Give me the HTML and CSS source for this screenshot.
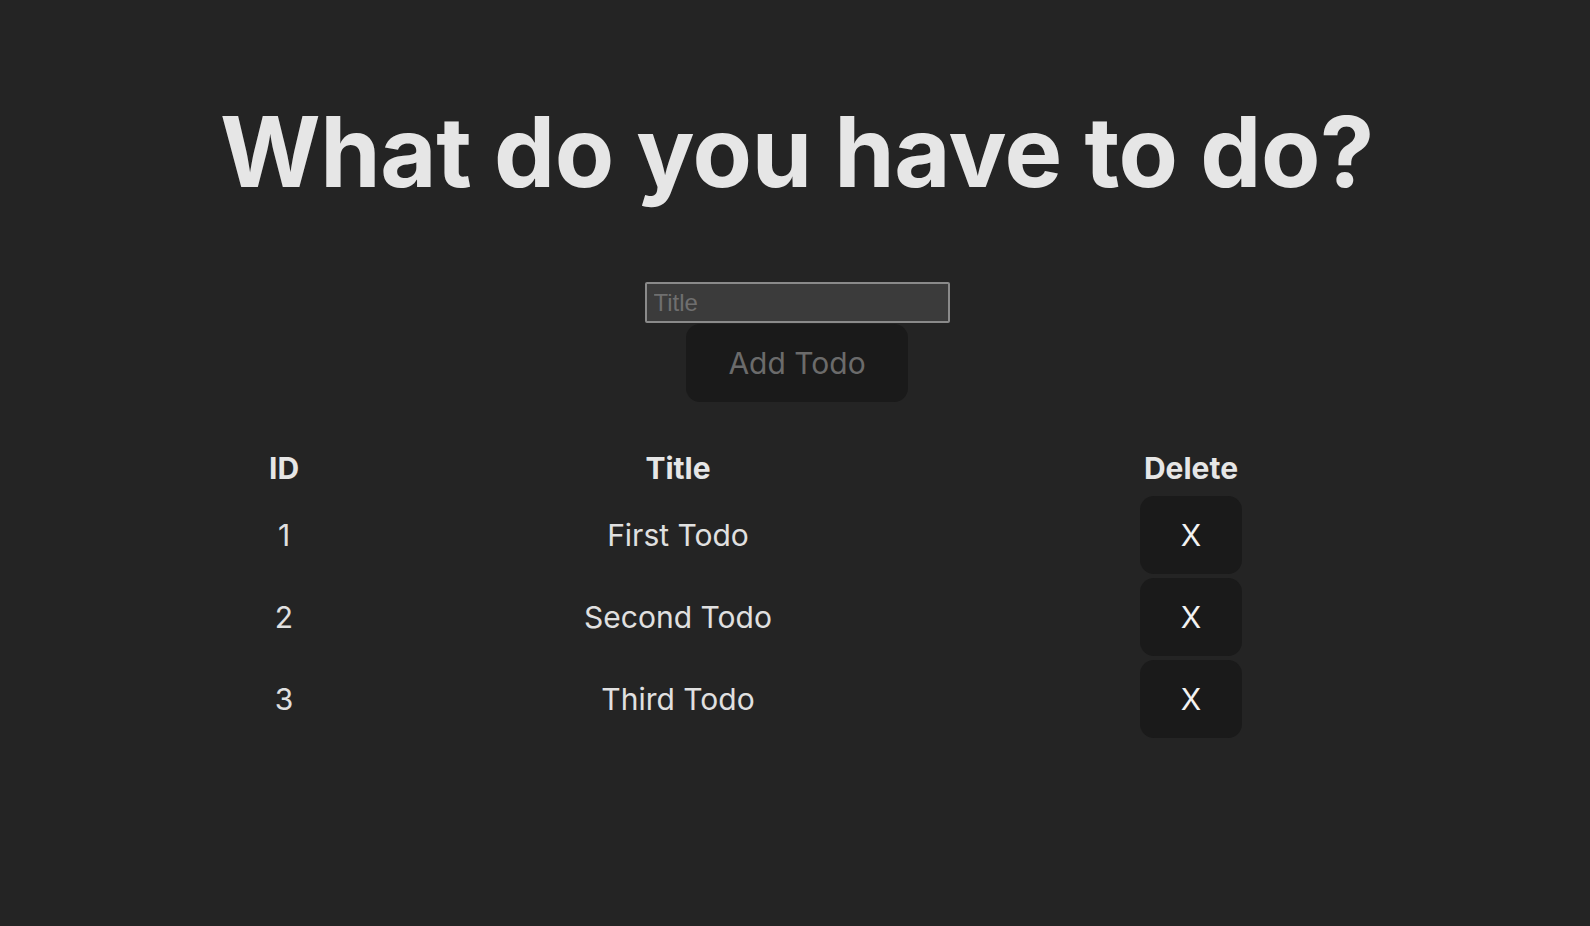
FILE: index.html
```html
<!DOCTYPE html>
<html lang="en">
<head>
<meta charset="utf-8">
<title>Todo</title>
<link rel="stylesheet" href="styles.css">
</head>
<body>
<main class="app">
  <h1 class="title">What do you have to do?</h1>
  <form class="add-form">
    <input class="title-input" type="text" placeholder="Title">
    <button class="btn add-btn" type="button" disabled>Add Todo</button>
  </form>
  <table class="todo-table">
    <colgroup>
      <col class="col-id">
      <col class="col-title">
      <col class="col-delete">
    </colgroup>
    <thead>
      <tr><th>ID</th><th>Title</th><th>Delete</th></tr>
    </thead>
    <tbody>
      <tr><td>1</td><td>First Todo</td><td><button class="btn del-btn" type="button">X</button></td></tr>
      <tr><td>2</td><td>Second Todo</td><td><button class="btn del-btn" type="button">X</button></td></tr>
      <tr><td>3</td><td>Third Todo</td><td><button class="btn del-btn" type="button">X</button></td></tr>
    </tbody>
  </table>
</main>
</body>
</html>
```
FILE: styles.css
```css
html, body {
  margin: 0;
  padding: 0;
}
body {
  background: #242424;
  color: rgba(255, 255, 255, 0.87);
  font-family: Inter, "Noto Sans", sans-serif;
  min-height: 926px;
}
.app {
  display: flex;
  flex-direction: column;
  align-items: center;
  padding: 97px 0 0 4px;
}
.title {
  margin: 0;
  font-size: 97px;
  line-height: 110px;
  font-weight: 700;
  color: #e6e6e6;
  letter-spacing: -0.4px;
}
.add-form {
  margin-top: 75px;
  display: flex;
  flex-direction: column;
  align-items: center;
  gap: 1px;
}
.title-input {
  box-sizing: border-box;
  width: 305px;
  height: 41px;
  padding: 0 7px;
  background: #3b3b3b;
  border: 2px solid #8a8a8a;
  border-radius: 2px;
  font-family: "Liberation Sans", Arial, sans-serif;
  font-size: 24px;
  color: #e0e0e0;
  outline: none;
}
.title-input::placeholder {
  color: #6f6f6f;
}
.btn {
  box-sizing: border-box;
  background: #1a1a1a;
  border: 2px solid transparent;
  border-radius: 14px;
  font-family: Inter, "Noto Sans", sans-serif;
  font-size: 30px;
  padding: 0;
  cursor: pointer;
}
.add-btn {
  width: 222px;
  height: 78px;
  color: #6b6b6b;
}
.todo-table {
  margin-top: 38px;
  width: 1114px;
  table-layout: fixed;
  border-collapse: separate;
  border-spacing: 0 4px;
  font-size: 30px;
}
.col-id { width: 88px; }
.col-title { width: 700px; }
.col-delete { width: 326px; }
.todo-table th {
  height: 48px;
  padding: 0;
  line-height: 48px;
  font-weight: 700;
  color: #e6e6e6;
  text-align: center;
}
.todo-table td {
  padding: 0;
  height: 78px;
  text-align: center;
  color: #e0e0e0;
  vertical-align: middle;
}
.del-btn {
  display: block;
  margin: 0 auto;
  width: 102px;
  height: 78px;
  color: #f2f2f2;
}
```
